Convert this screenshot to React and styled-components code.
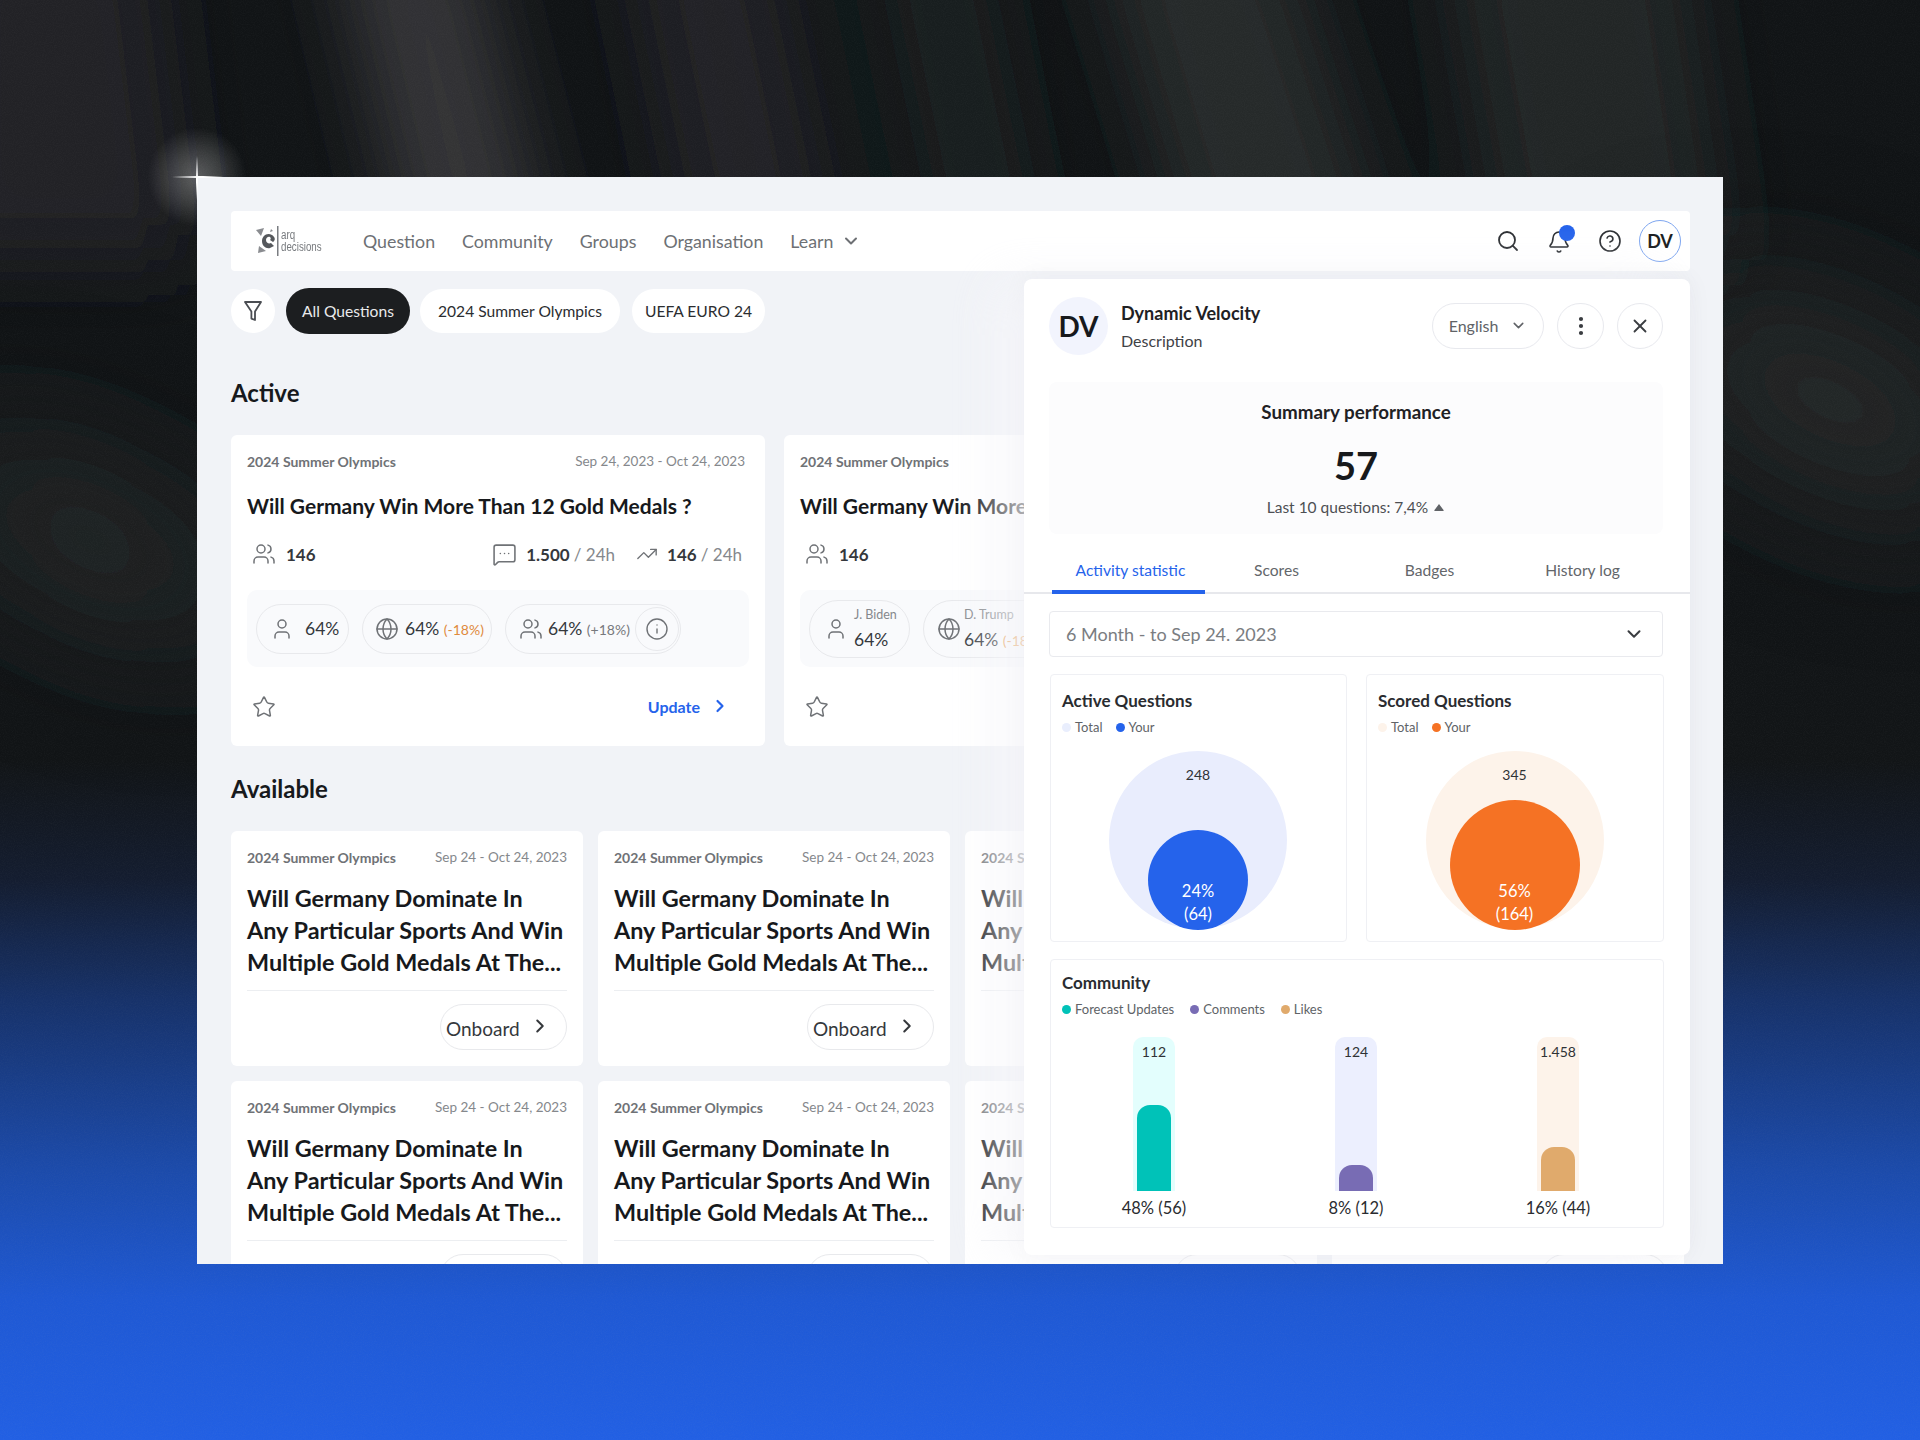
import React from "react";
import styled, { createGlobalStyle } from "styled-components";
import { Users, MessageSquareMore, TrendingUp, User, Globe, Info, Star, ChevronRight, ChevronDown, Search, Bell, CircleHelp, MoreVertical, X } from "lucide-react";

const FONT = `"Lato", "Noto Sans", sans-serif`;

const Global = createGlobalStyle`
  html, body { margin: 0; padding: 0; background: #111416; }
  * { box-sizing: border-box; }
  body { font-family: ${FONT}; color: #17191c; }
`;

const Stage = styled.div`
  position: relative; width: 1920px; height: 1440px; overflow: hidden; padding: 177px 197px 0;
  background: linear-gradient(180deg, #111416 0, #121517 760px, #141d30 880px, #17326a 1000px, #1c4bab 1170px, #1f59d4 1300px, #2260e4 1440px);
`;
const Backdrop = styled.svg`position: absolute; inset: 0; width: 1920px; height: 1440px;`;
const Halo = styled.div`
  position: absolute; left: 147px; top: 127px; width: 100px; height: 100px; border-radius: 50%;
  background: radial-gradient(circle, rgba(255,255,255,.3) 0, rgba(255,255,255,.16) 35%, rgba(255,255,255,0) 70%);
`;
const SparkH = styled.div`
  position: absolute; left: 172px; top: 176px; width: 52px; height: 2px; z-index: 3;
  background: linear-gradient(90deg, transparent, #fff 50%, #fff 60%, transparent);
`;
const SparkV = styled.div`
  position: absolute; left: 196px; top: 156px; width: 2px; height: 44px; z-index: 3;
  background: linear-gradient(180deg, transparent, #fff 50%, #fff 60%, transparent);
`;
const Win = styled.div`
  position: relative; width: 1526px; height: 1087px; background: #f1f3f7; overflow: hidden; padding: 34px 33px 0 34px;
`;
const Nav = styled.header`
  display: flex; align-items: center; height: 60px; background: #fff; border-radius: 4px; padding: 0 9px 0 25px;
`;
const LogoWrap = styled.div`display: flex; align-items: center; width: 107px; flex: none;`;
const LogoText = styled.div`
  font-family: "Liberation Sans", sans-serif; font-size: 12.5px; line-height: 12px; color: #777a7e; margin-left: 1px;
  transform: scaleX(.78); transform-origin: left center;
`;
const NavLinks = styled.nav`display: flex; align-items: center; gap: 27px; font-size: 17.8px; color: #6d7074; flex: 1;`;
const NavLink = styled.span`display: inline-flex; align-items: center; gap: 8px;`;
const NavIcons = styled.div`display: flex; align-items: center; gap: 27px; color: #2a2d31;`;
const BellWrap = styled.span`position: relative; display: inline-flex; margin-top: 2px;`;
const BellDot = styled.span`
  position: absolute; left: 12px; top: -5px; width: 16px; height: 16px; border-radius: 50%; background: #2563eb;
`;
const Me = styled.div`
  width: 42px; height: 42px; border-radius: 50%; border: 1.5px solid #7ea6f0; display: flex; align-items: center; justify-content: center;
  font-size: 18px; font-weight: 700; color: #1b1d20; margin-left: -10px;
`;
const Filters = styled.div`display: flex; align-items: center; margin-top: 17px; height: 46px;`;
const FilterBtn = styled.div`
  width: 44px; height: 44px; border-radius: 50%; background: #fff; display: flex; align-items: center; justify-content: center; color: #4a4d52;
`;
const Chip = styled.div`
  height: ${p => p.$on ? 46 : 44}px; width: ${p => p.$w}px; margin-left: ${p => p.$ml}px; border-radius: 23px; display: flex; align-items: center; justify-content: center; font-size: 15.6px;
  background: ${p => p.$on ? "#1c1e20" : "#fff"}; color: ${p => p.$on ? "#e9eaeb" : "#2b2d30"};
`;
const H2 = styled.h2`
  margin: ${p => p.$mt}px 0 0; font-size: 24px; line-height: 30px; font-weight: 700; color: #17191c;
`;
const ActiveRow = styled.div`display: flex; gap: 19px; margin-top: 27px;`;
const ActiveCard = styled.article`
  flex: none; width: 534px; height: 311px; background: #fff; border-radius: 6px; padding: 15px 16px 0;
`;
const Meta = styled.div`display: flex; justify-content: space-between; align-items: center; height: 22px; font-size: 13.5px; color: #85888c; padding-right: ${p => p.$pr || 0}px;`;
const Tag = styled.span`font-size: 14px; font-weight: 700; color: #6f7276;`;
const ActiveTitle = styled.h3`
  margin: 18px 0 0; font-size: 21px; line-height: 32px; font-weight: 700; color: #17191c; white-space: nowrap;
`;
const Stats = styled.div`display: flex; align-items: center; margin-top: 16px; padding: 0 7px 0 5px; height: 32px; font-size: 17px;`;
const Stat = styled.span`display: inline-flex; align-items: center; gap: ${p => p.$gap || 10}px; margin-left: ${p => p.$ml || 0}px; color: #35383c; font-weight: 700;`;
const Faint = styled.span`font-weight: 400; color: #85888c;`;
const Spacer = styled.span`flex: 1;`;
const IconGrey = styled.span`display: inline-flex; color: #6f7276;`;
const PillTray = styled.div`
  display: flex; align-items: center; gap: 13px; height: 77px; width: 502px; margin-top: 20px; padding: 0 9px; border-radius: 10px; background: #f9fafc; white-space: nowrap;
`;
const Pill = styled.div`
  flex: none; height: ${p => p.$h || 50}px; width: ${p => p.$w}px; border: 1px solid #e8e9ec; border-radius: 29px; display: flex; align-items: center; gap: ${p => p.$gap || 8}px; padding-left: ${p => p.$pl || 14}px; font-size: 17.5px; color: #35383c;
  position: relative;
`;
const Delta = styled.span`font-size: 14px; color: ${p => p.$c};`;
const InfoRing = styled.span`
  width: 44px; height: 44px; border-radius: 50%; border: 1px solid #e8e9ec; display: flex; align-items: center; justify-content: center; color: #6f7276; margin-left: auto; margin-right: 1px;
`;
const PillStack = styled.div`display: flex; flex-direction: column; gap: 10px; line-height: 1;`;
const PillName = styled.span`font-size: 12.5px; color: #85888c;`;
const Foot = styled.div`display: flex; align-items: center; justify-content: space-between; margin-top: 24px; padding: 0 5px 0 5px; height: 32px;`;
const Update = styled.span`display: inline-flex; align-items: center; gap: 10px; font-size: 16px; font-weight: 700; color: #2563eb; margin: -2px 14px 0 0;`;
const Grid = styled.div`display: grid; grid-template-columns: repeat(4, 352px); grid-auto-rows: 235px; gap: 15px; margin-top: 27px;`;
const QCard = styled.article`background: #fff; border-radius: 6px; padding: 15px 16px 0; `;
const QTitle = styled.h3`
  margin: 14px 0 0; font-size: 23.4px; line-height: 32px; font-weight: 700; color: #17191c; height: 96px; white-space: nowrap;
`;
const Rule = styled.div`height: 1px; background: #eceef1; margin-top: 12px;`;
const OnboardRow = styled.div`display: flex; justify-content: flex-end; margin-top: 13px;`;
const Onboard = styled.div`
  width: 127px; height: 46px; border: 1px solid #e8e9ec; border-radius: 23px; display: flex; align-items: center; padding: 3px 0 0 5px; font-size: 19px; color: #35383c; gap: 9px;
`;
const ChevUp = styled.span`display: inline-flex; margin-top: -6px; color: #35383c;`;

const Panel = styled.aside`
  position: absolute; left: 827px; top: 102px; width: 666px; height: 976px; background: #fff; border-radius: 8px; padding: 18px 0 0;
  box-shadow: -30px 0 50px rgba(245,246,249,.75), 0 0 24px rgba(20,30,50,.05);
`;
const PanelHead = styled.div`display: flex; align-items: center; padding: 0 27px 0 25px; height: 58px;`;
const Avatar = styled.div`
  width: 59px; height: 58px; border-radius: 50%; background: #f2f4fd; display: flex; align-items: center; justify-content: center; font-size: 28px; font-weight: 700; color: #17191c;
`;
const Who = styled.div`margin-left: 13px; flex: 1; display: flex; flex-direction: column; gap: 8px;`;
const WhoName = styled.div`font-size: 18px; font-weight: 700; color: #1f2124; line-height: 20px; margin-top: 2px;`;
const WhoDesc = styled.div`font-size: 16px; color: #3f4246; line-height: 20px;`;
const Ghost = styled.div`
  height: 46px; width: ${p => p.$w}px; border: 1px solid #e8e9ee; border-radius: 23px; display: flex; align-items: center; justify-content: center; gap: 12px; font-size: 16px; color: #606367; margin-left: ${p => p.$ml || 0}px; padding-bottom: ${p => p.$pb || 0}px;
`;
const Summary = styled.section`
  margin: 27px 27px 0 25px; height: 152px; background: #fcfcfd; border-radius: 8px; display: flex; flex-direction: column; align-items: center; padding-top: 19px;
`;
const SumTitle = styled.div`font-size: 18.8px; font-weight: 700; color: #1f2124; line-height: 22px;`;
const SumNum = styled.div`font-size: 38px; font-weight: 700; color: #17191c; line-height: 46px; margin-top: 19px;`;
const SumLast = styled.div`display: flex; align-items: center; gap: 5px; font-size: 15.5px; color: #4c4f53; line-height: 20px; margin-top: 9px;`;
const Caret = styled.svg`flex: none;`;
const Tabs = styled.div`display: grid; grid-template-columns: repeat(4, 153px); padding-left: 28px; height: 60px; border-bottom: 2px solid #e7e8ec;`;
const Tab = styled.div`
  display: flex; align-items: center; justify-content: center; height: 60px; padding: 15px ${p => p.$on ? 0 : 10}px 0 ${p => p.$on ? 4 : 0}px; font-size: 15.6px;
  color: ${p => p.$on ? "#2563eb" : "#63666a"}; border-bottom: 4px solid ${p => p.$on ? "#2563eb" : "transparent"};
`;
const Select = styled.div`
  margin: 17px 27px 0 25px; height: 46px; border: 1px solid #e9eaee; border-radius: 4px; display: flex; align-items: center; justify-content: space-between; padding: 0 17px 0 16px; font-size: 18px; color: #7a7d81;
`;
const TwoUp = styled.div`display: grid; grid-template-columns: 297px 298px; gap: 19px; margin: 17px 26px 0 26px;`;
const Box = styled.section`border: 1px solid #eff0f4; border-radius: 4px; height: ${p => p.$h}px; padding: ${p => p.$pt || 15}px 12px 0 11px; display: flex; flex-direction: column;`;
const BoxTitle = styled.div`font-size: 17px; font-weight: 700; color: #2a2c30; line-height: 22px;`;
const Legend = styled.div`display: flex; gap: ${p => p.$gap}px; margin-top: 6px; height: 18px; align-items: center; font-size: 13px; color: #606367;`;
const LegendItem = styled.span`display: inline-flex; align-items: center; gap: 4px;`;
const Dot = styled.i`width: 9px; height: 9px; border-radius: 50%; background: ${p => p.$c};`;
const Venn = styled.div`
  width: 178px; height: 178px; border-radius: 50%; background: ${p => p.$bg}; margin: 15px auto 0; display: flex; flex-direction: column; align-items: center; justify-content: space-between; font-size: 14px; color: #2f3235; padding-top: 15px; flex: none;
`;
const Inner = styled.div`
  width: ${p => p.$d}px; height: ${p => p.$d}px; border-radius: 50%; background: ${p => p.$c}; color: #fff; display: flex; flex-direction: column; align-items: center; justify-content: flex-end; padding-bottom: 4px; font-size: 16.5px; line-height: 23px; flex: none; margin-bottom: -1px;
`;
const Bars = styled.div`display: grid; grid-template-columns: repeat(3, 202px); margin: 19px 0 0 -9px;`;
const BarCol = styled.div`display: flex; flex-direction: column; align-items: center;`;
const Track = styled.div`
  width: 42px; height: 154px; background: ${p => p.$bg}; border-radius: 10px 10px 0 0; display: flex; flex-direction: column; align-items: center; justify-content: space-between; padding-top: 6px; font-size: 14px; color: #2f3235;
`;
const Fill = styled.div`width: 34px; background: ${p => p.$c}; border-radius: 13px 13px 0 0;`;
const BarLabel = styled.div`margin-top: 5px; font-size: 16.5px; color: #2a2c30; line-height: 24px;`;
const TwoUpSpacer = styled.div`height: 17px;`;
const CommunityBox = styled(Box)`margin: 0 26px 0 26px;`;

const LogoMark = () => (
  <svg width="24" height="30" viewBox="0 0 24 30" style={{ flex: "none" }}>
    <path d="M0 4l8-2-3 8z" fill="#8a8c90" />
    <path d="M2 27l1-7 7 5z" fill="#8a8c90" />
    <path d="M16 9c-5-3-10 1-10 6s4 8 8 7l4-2-3-3c-2 1-5 0-5-3 0-2 2-4 4-3 1 1 1 2 0 3l3 2c3-2 2-5-1-7z" fill="#55585c" />
    <path d="M15 3l2 2-3 1z" fill="#8a8c90" />
    <rect x="21" y="0" width="1.5" height="30" fill="#7a7d81" />
  </svg>
);

const Funnel = () => (
  <svg width="20" height="24" viewBox="0 0 20 24" fill="none" stroke="#4a4d52" strokeWidth="1.8" strokeLinejoin="round">
    <path d="M2 3h16l-6 9.5V21l-3.6-1.4V12.5z" />
  </svg>
);

const ActiveQ = ({ names }) => (
  <ActiveCard>
    <Meta $pr={4}><Tag>2024 Summer Olympics</Tag><span>Sep 24, 2023 - Oct 24, 2023</span></Meta>
    <ActiveTitle>Will Germany Win More Than 12 Gold Medals ?</ActiveTitle>
    <Stats>
      <Stat $gap={10}><IconGrey><Users size={24} strokeWidth={1.5} /></IconGrey>146</Stat>
      <Spacer />
      <Stat $gap={9}><IconGrey><MessageSquareMore size={25} strokeWidth={1.5} /></IconGrey><span>1.500 <Faint>/ 24h</Faint></span></Stat>
      <Stat $ml={21} $gap={9}><IconGrey><TrendingUp size={22} strokeWidth={1.5} /></IconGrey><span>146 <Faint>/ 24h</Faint></span></Stat>
    </Stats>
    {names ? (
      <PillTray>
        <Pill $w={101} $h={58} $pl={14} $gap={6}>
          <IconGrey><User size={24} strokeWidth={1.5} /></IconGrey>
          <PillStack><PillName>J. Biden</PillName><span>64%</span></PillStack>
        </Pill>
        <Pill $w={200} $h={58} $pl={13} $gap={3}>
          <IconGrey><Globe size={24} strokeWidth={1.5} /></IconGrey>
          <PillStack><PillName>D. Trump</PillName><span>64% <Delta $c="#e59a4f">(-18%)</Delta></span></PillStack>
        </Pill>
      </PillTray>
    ) : (
      <PillTray>
        <Pill $w={93} $pl={13} $gap={11}><IconGrey><User size={24} strokeWidth={1.5} /></IconGrey>64%</Pill>
        <Pill $w={130} $pl={12} $gap={6}><IconGrey><Globe size={24} strokeWidth={1.5} /></IconGrey><span>64% <Delta $c="#e08a3c">(-18%)</Delta></span></Pill>
        <Pill $w={176} $pl={13} $gap={5}><IconGrey><Users size={24} strokeWidth={1.5} /></IconGrey><span>64% <Delta $c="#77797d">(+18%)</Delta></span><InfoRing><Info size={24} strokeWidth={1.4} /></InfoRing></Pill>
      </PillTray>
    )}
    <Foot>
      <IconGrey><Star size={24} strokeWidth={1.5} /></IconGrey>
      {!names && <Update>Update <ChevronRight size={20} strokeWidth={2.6} /></Update>}
    </Foot>
  </ActiveCard>
);

const QuestionCard = () => (
  <QCard>
    <Meta><Tag>2024 Summer Olympics</Tag><span>Sep 24 - Oct 24, 2023</span></Meta>
    <QTitle>Will Germany Dominate In<br />Any Particular Sports And Win<br />Multiple Gold Medals At The...</QTitle>
    <Rule />
    <OnboardRow>
      <Onboard>Onboard <ChevUp><ChevronRight size={22} strokeWidth={2.2} /></ChevUp></Onboard>
    </OnboardRow>
  </QCard>
);

const barData = [
  { v: "112", bg: "#e3fefd", c: "#00c2b8", h: 86, l: "48% (56)" },
  { v: "124", bg: "#eceffe", c: "#786cb4", h: 26, l: "8% (12)" },
  { v: "1.458", bg: "#fdf3ea", c: "#e0aa6c", h: 44, l: "16% (44)" },
];

export default function App() {
  return (
    <Stage>
      <Global />
      <Backdrop viewBox="0 0 1920 1440" aria-hidden="true">
        <defs>
          <filter id="b1" x="-50%" y="-20%" width="200%" height="140%"><feGaussianBlur stdDeviation="38" /></filter>
          <filter id="b2" x="-50%" y="-50%" width="200%" height="200%"><feGaussianBlur stdDeviation="70" /></filter>
          <filter id="grain" x="0" y="0" width="100%" height="100%">
            <feTurbulence type="fractalNoise" baseFrequency="0.9" numOctaves="2" stitchTiles="stitch" />
            <feColorMatrix type="matrix" values="0 0 0 0 .5  0 0 0 0 .5  0 0 0 0 .5  1.4 0 0 0 -.45" />
          </filter>
        </defs>
        <g filter="url(#b1)">
          <path d="M-60 -80L150 -80L190 260L-60 260Z" fill="#212426" />
          <path d="M330 -80L465 -80L550 260L410 260Z" fill="#353639" />
          <path d="M620 -80L770 -80L840 260L690 260Z" fill="#212426" />
          <path d="M880 -80L970 -80L1040 260L950 260Z" fill="#1f2224" />
          <path d="M1090 -80L1280 -80L1390 260L1190 260Z" fill="#27292b" />
          <path d="M1440 -80L1680 -80L1730 260L1500 260Z" fill="#222527" />
        </g>
        <g filter="url(#b2)">
          <ellipse cx="90" cy="540" rx="180" ry="65" fill="#26292b" transform="rotate(25 90 540)" />
          <ellipse cx="1830" cy="400" rx="190" ry="85" fill="#282a2c" transform="rotate(25 1830 400)" />
        </g>
        <rect x="0" y="0" width="1920" height="1440" filter="url(#grain)" opacity="0.05" />
      </Backdrop>
      <Halo />
      <SparkH />
      <SparkV />
      <Win>
        <Nav>
          <LogoWrap>
            <LogoMark />
            <LogoText>arq<br />decisions</LogoText>
          </LogoWrap>
          <NavLinks>
            <NavLink>Question</NavLink>
            <NavLink>Community</NavLink>
            <NavLink>Groups</NavLink>
            <NavLink>Organisation</NavLink>
            <NavLink>Learn <ChevronDown size={20} strokeWidth={2.4} /></NavLink>
          </NavLinks>
          <NavIcons>
            <Search size={24} strokeWidth={1.8} />
            <BellWrap><Bell size={24} strokeWidth={1.6} /><BellDot /></BellWrap>
            <CircleHelp size={24} strokeWidth={1.6} />
            <Me>DV</Me>
          </NavIcons>
        </Nav>
        <Filters>
          <FilterBtn><Funnel /></FilterBtn>
          <Chip $on $w={124} $ml={11}>All Questions</Chip>
          <Chip $w={200} $ml={10}>2024 Summer Olympics</Chip>
          <Chip $w={133} $ml={12}>UEFA EURO 24</Chip>
        </Filters>
        <H2 $mt={44}>Active</H2>
        <ActiveRow>
          <ActiveQ />
          <ActiveQ names />
        </ActiveRow>
        <H2 $mt={28}>Available</H2>
        <Grid>
          {Array.from({ length: 8 }).map((_, i) => <QuestionCard key={i} />)}
        </Grid>
        <Panel>
          <PanelHead>
            <Avatar>DV</Avatar>
            <Who><WhoName>Dynamic Velocity</WhoName><WhoDesc>Description</WhoDesc></Who>
            <Ghost $w={112} $pb={2}>English <ChevronDown size={17} strokeWidth={2.2} /></Ghost>
            <Ghost $w={47} $ml={13}><MoreVertical size={24} strokeWidth={2.2} color="#3a3d41" /></Ghost>
            <Ghost $w={46} $ml={13}><X size={22} strokeWidth={2} color="#3a3d41" /></Ghost>
          </PanelHead>
          <Summary>
            <SumTitle>Summary performance</SumTitle>
            <SumNum>57</SumNum>
            <SumLast>Last 10 questions: 7,4%
              <Caret width="12" height="9" viewBox="0 0 12 9"><path d="M6 1l4.5 6a.6.6 0 0 1-.5 1H2a.6.6 0 0 1-.5-1z" fill="#606367" /></Caret>
            </SumLast>
          </Summary>
          <Tabs>
            <Tab $on>Activity statistic</Tab>
            <Tab>Scores</Tab>
            <Tab>Badges</Tab>
            <Tab>History log</Tab>
          </Tabs>
          <Select>6 Month - to Sep 24. 2023 <ChevronDown size={22} strokeWidth={2.2} color="#3a3d41" /></Select>
          <TwoUp>
            <Box $h={268}>
              <BoxTitle>Active Questions</BoxTitle>
              <Legend $gap={13}>
                <LegendItem><Dot $c="#e9eefd" />Total</LegendItem>
                <LegendItem><Dot $c="#2563eb" />Your</LegendItem>
              </Legend>
              <Venn $bg="#e9edfd">
                248
                <Inner $d={100} $c="#2563eb"><span>24%</span><span>(64)</span></Inner>
              </Venn>
            </Box>
            <Box $h={268}>
              <BoxTitle>Scored Questions</BoxTitle>
              <Legend $gap={13}>
                <LegendItem><Dot $c="#fdf3ea" />Total</LegendItem>
                <LegendItem><Dot $c="#f57224" />Your</LegendItem>
              </Legend>
              <Venn $bg="#fdf3ea">
                345
                <Inner $d={130} $c="#f57224"><span>56%</span><span>(164)</span></Inner>
              </Venn>
            </Box>
          </TwoUp>
          <TwoUpSpacer />
          <CommunityBox $h={269} $pt={12}>
            <BoxTitle>Community</BoxTitle>
            <Legend $gap={16}>
              <LegendItem><Dot $c="#00c2b8" />Forecast Updates</LegendItem>
              <LegendItem><Dot $c="#786cb4" />Comments</LegendItem>
              <LegendItem><Dot $c="#e0aa6c" />Likes</LegendItem>
            </Legend>
            <Bars>
              {barData.map(b => (
                <BarCol key={b.v}>
                  <Track $bg={b.bg}>{b.v}<Fill $c={b.c} style={{ height: b.h }} /></Track>
                  <BarLabel>{b.l}</BarLabel>
                </BarCol>
              ))}
            </Bars>
          </CommunityBox>
        </Panel>
      </Win>
    </Stage>
  );
}
